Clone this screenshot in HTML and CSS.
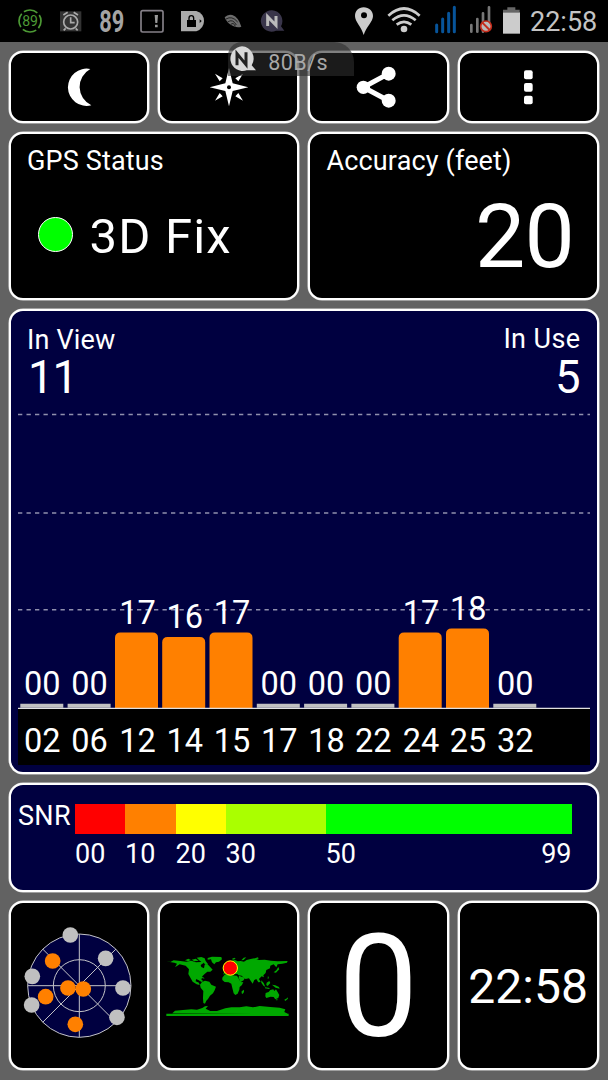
FILE: index.html
```html
<!DOCTYPE html>
<html lang="en">
<head>
<meta charset="utf-8">
<title>GPS Status</title>
<link rel="stylesheet" href="styles.css">
</head>
<body>
<header class="statusbar">
  <svg class="notifications" viewBox="0 0 912 126" width="304" height="42">
    <circle cx="90" cy="63" r="33" fill="none" stroke="#4d9a35" stroke-width="5" stroke-dasharray="43 8.8" stroke-dashoffset="20"/>
    <text class="ring-text" x="90" y="79" text-anchor="middle">89</text>
    <rect x="180" y="34" width="64" height="60" fill="#333"/>
    <g fill="none" stroke="#aaa" stroke-width="5"><circle cx="212" cy="66" r="21"/><path d="M212 52v16h12M190 45l13-8M234 45l-13-8M197 85l-6 6M227 85l6 6"/></g>
    <text class="big-text" x="298" y="95" textLength="75" lengthAdjust="spacingAndGlyphs">89</text>
    <rect x="423" y="32" width="66" height="64" rx="5" fill="none" stroke="#858088" stroke-width="5"/>
    <path d="M464 45h10l-2 24h-6zM465 74h8v8h-8z" fill="#999"/>
    <path d="M543 33h46q23 8 23 30t-23 31h-46z" fill="#aaa"/>
    <path d="M567 60v-5q0-8 7-8t7 8v5" fill="none" stroke="#000" stroke-width="4"/><path d="M561 60h27v21h-27z"/><path d="M599 58l6 5-6 6z"/>
    <path d="M674 52Q684 41 697 45Q716 52 724 80Q714 84 701 79Q680 70 674 52z" fill="#6d6d6d"/>
    <g fill="none" stroke="#222" stroke-width="3"><path d="M678 57Q696 46 713 66M683 66Q698 55 709 75M692 74Q700 65 706 79"/></g>
    <path d="M816 31a32 32 0 1 0 12 61h25l-10-13a32 32 0 0 0-27-48z" fill="#39354a"/>
    <path d="M803 78V50l25 26V48" fill="none" stroke="#bbb" stroke-width="9"/>
  </svg>
  <svg class="signals" viewBox="0 0 672 126" width="224" height="42">
    <path d="M179 22c-16 0-26 11-26 26 0 17 19 32 26 57 8-25 28-40 28-57 0-15-12-26-28-26z" fill="#ccc"/><circle cx="180" cy="46" r="9"/>
    <g fill="none" stroke="#ccc" stroke-width="8"><path d="M253 47q47-43 94 0M265 61q35-30 70 0M278 74q22-17 44 0"/></g><circle cx="300" cy="87" r="10" fill="#ccc"/>
    <g stroke="#07549a" stroke-width="9" stroke-linecap="round"><path d="M398 75v20M416 57v38M434 40v55M451 22v73"/></g>
    <g stroke="#777" stroke-width="8" stroke-linecap="round"><path d="M502 75v20M520 57v38M537 40v55M555 22v60"/></g>
    <circle cx="546" cy="79" r="16" fill="#bbb" stroke="#c52d1c" stroke-width="5"/><path d="M535 68l22 22" stroke="#c52d1c" stroke-width="6"/>
    <path d="M610 22h24v7h13v7h-50v-7h13z" fill="#666"/><path d="M597 37h51v64h-51z" fill="#ccc"/>
  </svg>
  <span class="status-time">22:58</span>
</header>

<main class="board">
  <nav class="row toolbar">
    <button class="card"><svg viewBox="195 200 80 120" width="26.7" height="40"><path d="M268 206A56 56 0 1 0 271 315A61 61 0 0 1 268 206z" fill="#fff"/></svg></button>
    <button class="card"><svg viewBox="626 200 120 120" width="40" height="40"><path d="M686 203l11 46 47 12-47 11-11 46-11-46-47-11 47-12zM644 220l23 14-9 9zM728 220l-23 14 9 9zM644 301l23-13-9-10zM728 301l-23-13 9-10z" fill="#fff"/><circle cx="686" cy="261" r="6"/></svg></button>
    <button class="card"><svg class="share" viewBox="157 197 122 126" width="40.700" height="42"><path d="M255 220L179 261l76 40" fill="none" stroke="#fff" stroke-width="15"/><g fill="#fff"><circle cx="255" cy="220" r="21"/><circle cx="179" cy="261" r="20"/><circle cx="255" cy="301" r="21"/></g></svg></button>
    <button class="card"><svg viewBox="658 200 32 120" width="10.7" height="40"><g fill="#fff"><rect x="661" y="210" width="26" height="27" rx="6"/><rect x="661" y="248" width="26" height="26" rx="6"/><rect x="661" y="286" width="26" height="26" rx="6"/></g></svg></button>
  </nav>

  <section class="row readings">
    <div class="card reading">
      <div class="title">GPS Status</div>
      <div class="fix"><span class="fix-dot"></span><span class="fix-text">3D Fix</span></div>
    </div>
    <div class="card reading">
      <div class="title accuracy-title">Accuracy (feet)</div>
      <div class="accuracy">20</div>
    </div>
  </section>

  <section class="card blue chart">
    <div class="chart-head">
      <div class="in-view"><div class="title">In View</div><div class="count">11</div></div>
      <div class="in-use"><div class="title">In Use</div><div class="count">5</div></div>
    </div>
    <svg class="plot" viewBox="18 405 572 363" width="572" height="363">
      <path d="M18 414.5H590M18 513H590M18 609.7H590" stroke="#9090ad" stroke-width="1.5" stroke-dasharray="4.3 4.2"/>
      <rect x="18" y="708" width="572" height="57"/>
      <g fill="#c0c0c0"><path d="M20.3 703.7h43v4h-43zM67.6 703.7h43v4h-43zM256.8 703.7h43v4h-43zM304.1 703.7h43v4h-43zM351.4 703.7h43v4h-43zM493.3 703.7h43v4h-43z"/></g>
      <g fill="#ff8000">
        <path d="M115 708V638q0-5.500 5.500-5.500h32q5.500 0 5.500 5.500v70z"/>
        <path d="M162.200 708V642.500q0-5.500 5.500-5.500h32q5.500 0 5.500 5.500V708z"/>
        <path d="M209.500 708V638q0-5.500 5.500-5.500h32q5.500 0 5.500 5.500v70z"/>
        <path d="M398.700 708V638q0-5.500 5.500-5.500h32q5.500 0 5.500 5.500v70z"/>
        <path d="M446 708V634q0-5.500 5.500-5.500h32q5.500 0 5.500 5.500v74z"/>
      </g>
      <path d="M18 708.300H590" stroke="#e0e0e0" stroke-width="1.200"/>
      <g class="plot-text">
        <text x="42.300" y="694.500">00</text><text x="89.600" y="694.500">00</text><text x="137.500" y="623.700">17</text><text x="184.800" y="627.800">16</text><text x="232" y="623.700">17</text><text x="278.700" y="694.500">00</text><text x="326" y="694.500">00</text><text x="373.300" y="694.500">00</text><text x="421" y="623.700">17</text><text x="468.300" y="619.500">18</text><text x="515.200" y="694.500">00</text>
        <text x="42.300" y="752">02</text><text x="89.600" y="752">06</text><text x="137.500" y="752">12</text><text x="184.800" y="752">14</text><text x="232" y="752">15</text><text x="279.300" y="752">17</text><text x="326.500" y="752">18</text><text x="373.300" y="752">22</text><text x="421" y="752">24</text><text x="468" y="752">25</text><text x="515.200" y="752">32</text>
      </g>
    </svg>
  </section>

  <section class="card blue snr">
    <span class="title snr-name">SNR</span>
    <div class="scale">
      <div class="band red"><i></i>00</div>
      <div class="band orange"><i></i>10</div>
      <div class="band yellow"><i></i>20</div>
      <div class="band lime"><i></i>30</div>
      <div class="band green"><i></i><span class="ends"><b>50</b><b>99</b></span></div>
    </div>
  </section>

  <section class="row tiles">
    <div class="card tile">
      <svg class="sky" viewBox="35 75 340 350" width="113.300" height="116.700">
        <circle cx="207" cy="260" r="155" fill="#000040"/>
        <g fill="none" stroke="#c4c4c8" stroke-width="3"><circle cx="207" cy="260" r="155"/><circle cx="207" cy="260" r="78"/><path d="M207 105V415M52 260H362M97 150L317 370M97 370L317 150"/></g>
        <g fill="#c0c0c0"><circle cx="180" cy="108" r="23.500"/><circle cx="286" cy="178" r="23.500"/><circle cx="66" cy="232" r="23.500"/><circle cx="64" cy="318" r="23.500"/><circle cx="338" cy="267" r="23.500"/><circle cx="320" cy="355" r="23.500"/></g>
        <g fill="#ff8000"><circle cx="127" cy="186" r="23.500"/><circle cx="173" cy="267" r="23.500"/><circle cx="219" cy="270" r="23.500"/><circle cx="106" cy="293" r="23.500"/><circle cx="195" cy="376" r="23.500"/></g>
      </svg>
    </div>
    <div class="card tile">
      <svg class="map" viewBox="15 40 385 200" width="128.300" height="66.700">
        <g fill="#00a800">
          <path d="M22 66l12 4 10-5 20 2 18 2 15-3 14 5 14-1 4-5 6 7-10 7 2 6 8 4 2-11 8-2 8 8 8 9-7 6-9 0-9 8-6 6-3 11-5-6-10 1-2 9 10 4 2 7-9-2-12-8-8-14-5-9 2-14-10-11-18-4-14 9 6-11-8-3-14-2z"/>
          <path d="M78 65l10-5 8 4-9 4zM98 63l12-3 9 6-13 2zM113 57l14-2 10 4 3 8 7 9-7 3-8-9-9-3zM146 58l13-4 28 1 2 7-9 7-9 2-5 6-7-6-3-9-10 1z"/>
          <path d="M108 113l8 3 9 3 2 4 6 4-5 3-10-6-9-4zM122 114l11 2 4 4-12-3z"/>
          <path d="M129 130l9-4 13 3 6 9 14 6-4 11-5 9-9 7-6 10-5 5-4 9-5-2-1-15 1-21-8-10-2-9z"/>
          <path d="M194 103l3-8 5-9 3-10 10-8 13-4 8 4 9-1 10 2 8-5 12-3 11-2 14 5 17-1 19 3 20 2 30-1-2 5-14 3-14 2-4 9-8-9-10 4-1 8-11 5-2 9-7 7 2 6-7-3-8 8 5 9-7 1-6-10-6 3-5 11-6-9-5-7-10 2-6-4-6-6-9-1-4-4-12 1-4-4-10 3-4-4-10 4-2 3z"/>
          <path d="M240 111l10 4 8 2-4 8-9 5-6-12z"/>
          <path d="M190 117l8-10 13-1 8 4 15 1 8 14 6 6 5-1-4 9-7 6-1 8-5 12-7 4-5-5-4-16-3-13-8-4-12-1-7-6zM248 158l7-5 0 7-4 6-3-2z"/>
          <path d="M320 163l9-3 5-6 9-2 3 5 5-5 7 12 3 5-3 9-9 4-5-7-9-1-13 4-3-5zM351 182h5l-2 4zM376 183l8-4 2-3 1 4-8 7z"/>
          <path d="M307 125l7 8 5 11-5-2-7-10zM323 132l8-5 3 6-8 9-4-3zM339 138l10 2 11 5 2 5-12-3zM318 146l14 2-1 3-13-2zM327 111l3 8-4 1zM344 101l8-6 6-10 3 7-10 10zM218 61l8-4 4 3-7 3zM247 65l7-8 8-1-8 8zM288 59l9-3 2 4-10 2z"/>
          <path d="M22 225h367v7H22zM40 224l8-8 24-2 25-2 17 1 16-5 8-5 9-1-7 8 14 7 20 0 25-8 18-3 25 0 20-3 20 3 20-4 32 3 28 2 17 5-3 8 12 6z"/>
        </g>
        <circle cx="214" cy="88" r="21.500" fill="#f00" stroke="#ff0" stroke-width="3"/>
      </svg>
    </div>
    <div class="card tile speed">0</div>
    <div class="card tile clock">22:58</div>
  </section>
</main>

<aside class="netspeed">
  <svg viewBox="686 135 86 84" width="28.700" height="28"><path d="M728 139a37 37 0 1 0 14 72h28l-13-15a37 37 0 0 0-29-57z" fill="#d8d8d8"/><path d="M713 196V161l27 33V157" fill="none" stroke="#222" stroke-width="9"/></svg>
  <span>80B/s</span>
</aside>
</body>
</html>
```
FILE: styles.css
```css
* { box-sizing: border-box; }
body { margin: 0; width: 608px; height: 1080px; overflow: hidden; background: #626262; color: #fff; font-family: Roboto, "Liberation Sans", sans-serif; position: relative; }
svg { display: block; flex: none; }
.statusbar { height: 42px; display: flex; background: #000; }
.signals { margin-right: 2px; }
.statusbar .status-time { font-size: 27px; line-height: 27px; padding-top: 8.500px; color: #c4c4c4; letter-spacing: 0; white-space: nowrap; }
.ring-text { font-size: 42px; fill: #4d9a35; }
.big-text { font-size: 94px; font-weight: 700; fill: #a4a4a4; }

.board { padding: 9px 9.500px 0 8.500px; display: grid; grid-template-rows: 72px 168px 464.500px 109.500px 169px; row-gap: 9px; }
.row { display: grid; column-gap: 9px; }
.toolbar, .tiles { grid-template-columns: repeat(4, 1fr); }
.readings { grid-template-columns: repeat(2, 1fr); }
.card { min-width: 0; padding: 0; background: #000; border: 2px solid #fff; border-radius: 14px; box-shadow: 0 0 0 .5px #ddd; color: #fff; font-family: inherit; }
.toolbar .card { display: flex; align-items: center; justify-content: center; }
.toolbar .share { margin-left: -4px; }
.blue { background: #000040; }
.title { font-size: 27px; line-height: 27px; white-space: nowrap; letter-spacing: .15px; }

.reading { padding: 13.500px 22.500px 0 16.500px; }
.fix { display: flex; align-items: center; gap: 16.500px; padding: 37.500px 0 0 11px; }
.fix-dot { width: 35px; height: 35px; margin-top: -4px; border-radius: 50%; border: 1.500px solid #fff; background: #0f0; }
.fix-text { font-size: 49px; line-height: 49px; letter-spacing: 1.200px; }
.accuracy { padding-top: 17px; font-size: 89.500px; line-height: 89.500px; text-align: right; letter-spacing: -.8px; }

.chart-head { height: 94px; display: flex; justify-content: space-between; padding: 15.500px 16px 0 16.500px; }
.in-use { text-align: right; margin-top: -1px; }
.in-use .title { letter-spacing: .4px; }
.count { font-size: 45.500px; line-height: 46px; margin-top: 1px; }
.in-view .count { margin-left: 1px; letter-spacing: -1px; }
.in-use .count { margin-top: 2px; }
.plot { margin-left: 7.500px; }
.plot-text { font-size: 32.500px; fill: #fff; text-anchor: middle; }

.snr { display: flex; padding: 19px 25px 0 7.500px; }
.snr-name { width: 57px; line-height: 25px; letter-spacing: .3px; }
.scale { flex: 1; display: grid; grid-template-columns: 50px 50.500px 50px 100px 1fr; font-size: 27px; line-height: 27px; }
.band i { display: block; height: 30.500px; margin-bottom: 7px; background: #0f0; }
.red i { background: #f00; }
.orange i { background: #ff8000; }
.yellow i { background: #ff0; }
.lime i { background: #af0; }
.ends { display: flex; justify-content: space-between; }
.ends b { font-weight: 400; }

.tile { display: flex; align-items: center; justify-content: center; }
.sky { margin-bottom: 6px; }
.speed { padding-top: 5px; font-size: 142px; line-height: 142px; }
.clock { padding-top: 2px; font-size: 48px; line-height: 48px; }

.netspeed { position: absolute; left: 228px; top: 42px; width: 126px; height: 34px; display: flex; align-items: flex-start; border-radius: 14px 20px 0 0; background: rgba(45, 45, 45, .6); color: #a8a8a8; font-size: 21.500px; line-height: 21px; letter-spacing: .5px; }
.netspeed svg { margin-top: 3px; }
.netspeed span { margin: 9.500px 0 0 11.500px; }
```
